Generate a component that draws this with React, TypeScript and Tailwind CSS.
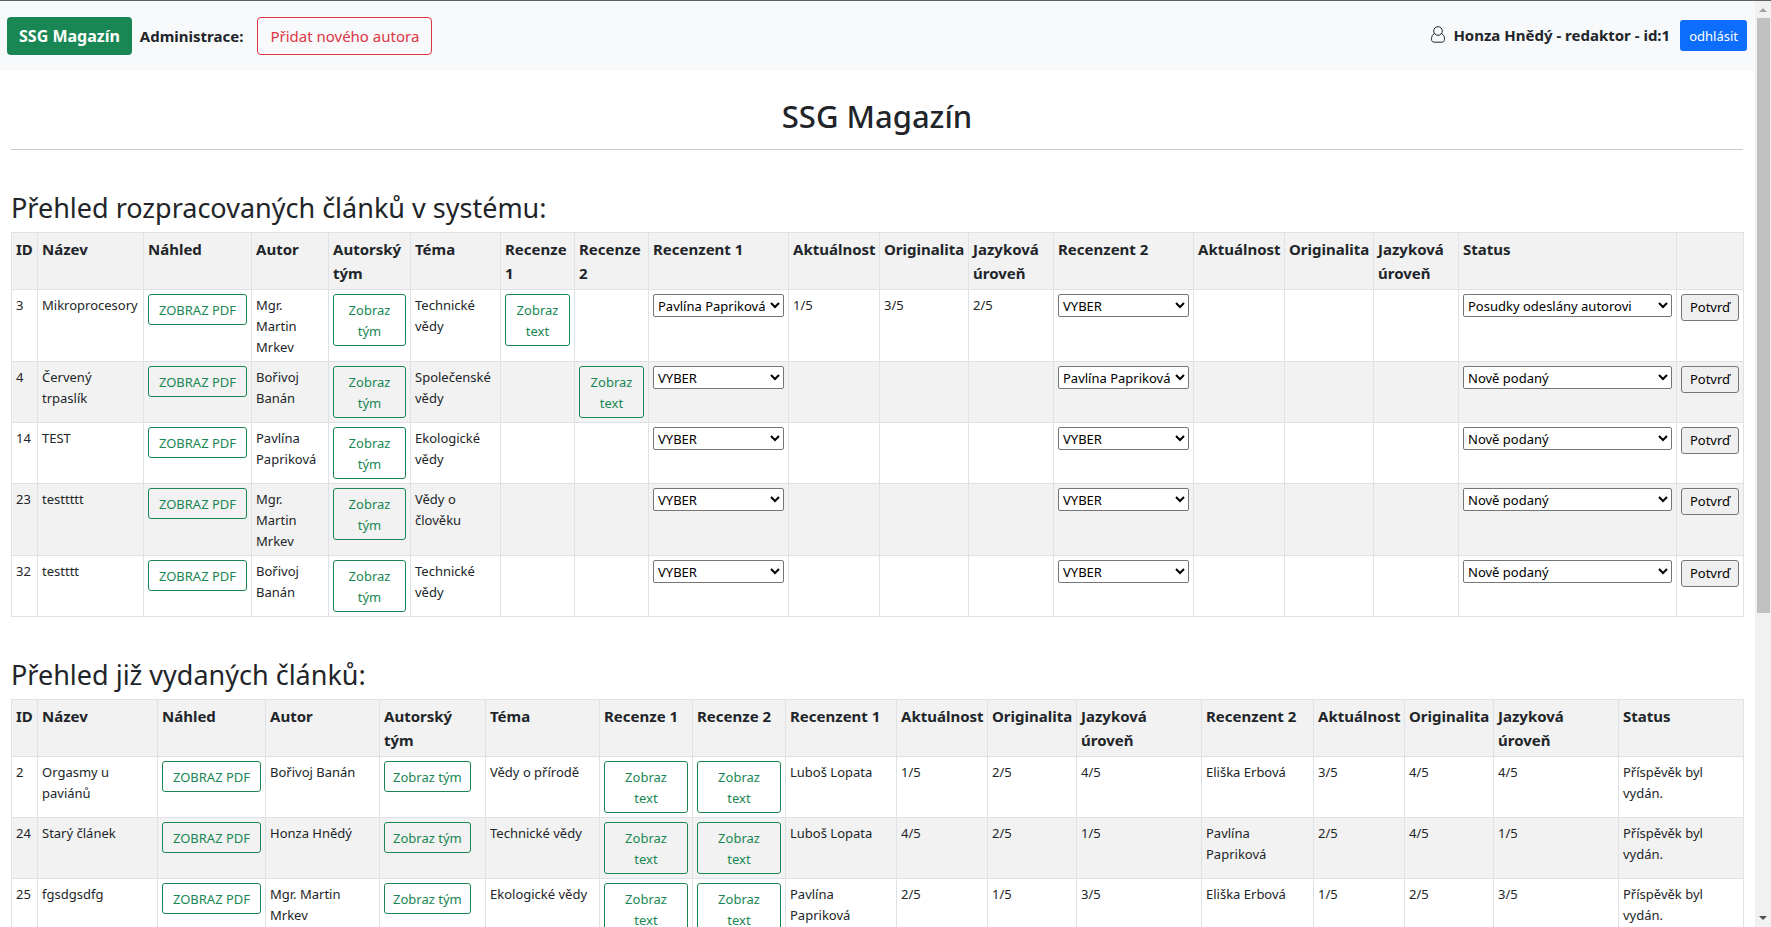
import type { ReactNode } from "react";

type WorkRow = {
  id: number;
  name: string;
  author: string;
  topic: string;
  review1: boolean;
  review2: boolean;
  reviewer1: string;
  scores1: string[];
  reviewer2: string;
  scores2: string[];
  status: string;
};

type PublishedRow = {
  id: number;
  name: string;
  author: string;
  topic: string;
  reviewer1: string;
  scores1: string[];
  reviewer2: string;
  scores2: string[];
  status: string;
};

const NONE = ["", "", ""];

const inProgress: WorkRow[] = [
  { id: 3, name: "Mikroprocesory", author: "Mgr. Martin Mrkev", topic: "Technické vědy", review1: true, review2: false, reviewer1: "Pavlína Papriková", scores1: ["1/5", "3/5", "2/5"], reviewer2: "VYBER", scores2: NONE, status: "Posudky odeslány autorovi" },
  { id: 4, name: "Červený trpaslík", author: "Bořivoj Banán", topic: "Společenské vědy", review1: false, review2: true, reviewer1: "VYBER", scores1: NONE, reviewer2: "Pavlína Papriková", scores2: NONE, status: "Nově podaný" },
  { id: 14, name: "TEST", author: "Pavlína Papriková", topic: "Ekologické vědy", review1: false, review2: false, reviewer1: "VYBER", scores1: NONE, reviewer2: "VYBER", scores2: NONE, status: "Nově podaný" },
  { id: 23, name: "testtttt", author: "Mgr. Martin Mrkev", topic: "Vědy o člověku", review1: false, review2: false, reviewer1: "VYBER", scores1: NONE, reviewer2: "VYBER", scores2: NONE, status: "Nově podaný" },
  { id: 32, name: "testttt", author: "Bořivoj Banán", topic: "Technické vědy", review1: false, review2: false, reviewer1: "VYBER", scores1: NONE, reviewer2: "VYBER", scores2: NONE, status: "Nově podaný" },
];

const published: PublishedRow[] = [
  { id: 2, name: "Orgasmy u paviánů", author: "Bořivoj Banán", topic: "Vědy o přírodě", reviewer1: "Luboš Lopata", scores1: ["1/5", "2/5", "4/5"], reviewer2: "Eliška Erbová", scores2: ["3/5", "4/5", "4/5"], status: "Příspěvěk byl vydán." },
  { id: 24, name: "Starý článek", author: "Honza Hnědý", topic: "Technické vědy", reviewer1: "Luboš Lopata", scores1: ["4/5", "2/5", "1/5"], reviewer2: "Pavlína Papriková", scores2: ["2/5", "4/5", "1/5"], status: "Příspěvěk byl vydán." },
  { id: 25, name: "fgsdgsdfg", author: "Mgr. Martin Mrkev", topic: "Ekologické vědy", reviewer1: "Pavlína Papriková", scores1: ["2/5", "1/5", "3/5"], reviewer2: "Eliška Erbová", scores2: ["1/5", "2/5", "3/5"], status: "Příspěvěk byl vydán." },
];

const headers = [
  "ID", "Název", "Náhled", "Autor", "Autorský tým", "Téma", "Recenze 1", "Recenze 2", "Recenzent 1",
  "Aktuálnost", "Originalita", "Jazyková úroveň", "Recenzent 2", "Aktuálnost", "Originalita", "Jazyková úroveň", "Status",
];

const workCols = [
  "w-[26px]", "w-[106px]", "w-[108px]", "w-[77px]", "w-[82px]", "w-[90px]", "w-[74px]", "w-[74px]", "w-[140px]",
  "w-[91px]", "w-[89px]", "w-[85px]", "w-[140px]", "w-[91px]", "w-[89px]", "w-[85px]", "w-[218px]", "w-[67px]",
];

const publishedCols = [
  "w-[26px]", "w-[120px]", "w-[108px]", "w-[114px]", "w-[106px]", "w-[114px]", "w-[93px]", "w-[93px]", "w-[111px]",
  "w-[91px]", "w-[89px]", "w-[125px]", "w-[112px]", "w-[91px]", "w-[89px]", "w-[125px]", "w-[125px]",
];

const reviewers = ["VYBER", "Pavlína Papriková", "Luboš Lopata", "Eliška Erbová"];
const statuses = ["Nově podaný", "Posudky odeslány autorovi", "Příspěvěk byl vydán."];

function Th({ children }: { children?: ReactNode }) {
  return (
    <th className="border border-[#dee2e6] bg-[#f2f2f2] p-1 text-left align-top text-[15px] leading-6 font-bold">
      {children}
    </th>
  );
}

function Td({ children }: { children?: ReactNode }) {
  return <td className="border border-[#dee2e6] px-1 pt-[5px] pb-[3px] align-top">{children}</td>;
}

function ControlTd({ children }: { children?: ReactNode }) {
  return <td className="border border-[#dee2e6] p-1 align-top">{children}</td>;
}

function OutlineButton({ children, fit = false }: { children: ReactNode; fit?: boolean }) {
  return (
    <a
      href="#"
      className={
        fit
          ? "block w-fit rounded-[3px] border border-[#198754] px-2 pt-[5px] pb-[3px] text-center text-[#198754]"
          : "block rounded-[3px] border border-[#198754] px-1 pt-[5px] pb-[3px] text-center text-[#198754]"
      }
    >
      {children}
    </a>
  );
}

function Select({ label, value, options }: { label: string; value: string; options: string[] }) {
  return (
    <select
      aria-label={label}
      defaultValue={value}
      className="block h-[23px] w-full rounded-[2px] border border-[#767676] bg-white text-[13px] text-black"
    >
      {options.map((o) => (
        <option key={o}>{o}</option>
      ))}
    </select>
  );
}

function Grid({ cols, heads, children }: { cols: string[]; heads: string[]; children: ReactNode }) {
  return (
    <table className="w-full table-fixed border-collapse text-[13px] leading-[21px]">
      <colgroup>
        {cols.map((c, i) => (
          <col key={i} className={c} />
        ))}
      </colgroup>
      <thead>
        <tr>
          {heads.map((h, i) => (
            <Th key={i}>{h}</Th>
          ))}
        </tr>
      </thead>
      <tbody className="[&>tr:nth-child(even)]:bg-[#f2f2f2]">{children}</tbody>
    </table>
  );
}

function UserIcon() {
  return (
    <svg viewBox="0 0 14 17" className="h-[17px] w-[14px]" fill="none" stroke="currentColor" strokeWidth="1" aria-hidden="true">
      <circle cx="7" cy="5" r="4.3" />
      <path d="M3.4 7.6C1.400 8.400 .5 10.600 .5 13.200c0 1.900 1.100 3 2.600 3h7.800c1.500 0 2.600-1.100 2.600-3 0-2.600-.9-4.800-2.900-5.600" />
    </svg>
  );
}

function ScrollTrack() {
  return (
    <div className="flex w-4 shrink-0 flex-col bg-[#f1f1f1]" aria-hidden="true">
      <svg viewBox="0 0 16 17" className="h-[17px] w-4" fill="#a3a3a3">
        <path d="M4 11l4-4 4 4z" />
      </svg>
      <div className="flex-1 pr-px pl-0.5">
        <div className="h-2/3 bg-[#c1c1c1]" />
      </div>
      <svg viewBox="0 0 16 17" className="h-[17px] w-4" fill="#505050">
        <path d="M4 6l4 4 4-4z" />
      </svg>
    </div>
  );
}

export default function App() {
  return (
    <div className="flex h-screen overflow-hidden border-t border-[#5f5f66] bg-white font-['Noto_Sans','Open_Sans',sans-serif] text-[#212529]">
      <div className="min-w-0 flex-1 overflow-hidden">
        <header className="flex h-[70px] items-center justify-between bg-[#f8f9fb] pr-2 pb-px pl-[7px]">
          <div className="flex items-center">
            <a href="#" className="rounded-[4px] bg-[#198754] px-3 py-[7px] text-base leading-6 font-bold text-white">
              SSG Magazín
            </a>
            <span className="ml-2 text-[15px] leading-6 font-bold">Administrace:</span>
            <a href="#" className="ml-[14px] rounded-[4px] border border-[#dc3545] px-3 py-1.5 text-[15px] leading-6 text-[#dc3545]">
              Přidat nového autora
            </a>
          </div>
          <div className="flex items-center">
            <div className="flex items-center gap-2 pb-0.5">
              <UserIcon />
              <span className="text-[15px] leading-6 font-bold">Honza Hnědý - redaktor - id:1</span>
            </div>
            <button type="button" className="ml-[10px] rounded-[3px] bg-[#0d6efd] px-[9px] pt-[6px] pb-1 text-[13px] leading-[21px] text-white">
              odhlásit
            </button>
          </div>
        </header>

        <main className="pr-3 pl-[11px]">
          <h1 className="border-b border-[#c8c9ca] pt-[26px] pb-[14px] text-center text-[31px] leading-[38px] font-medium">
            SSG Magazín
          </h1>

          <section className="pt-[41px]">
            <h2 className="mb-[7px] text-[27px] leading-[34px] font-normal">Přehled rozpracovaných článků v systému:</h2>
            <Grid cols={workCols} heads={[...headers, ""]}>
              {inProgress.map((r) => (
                <tr key={r.id}>
                  <Td>{r.id}</Td>
                  <Td>{r.name}</Td>
                  <ControlTd><OutlineButton>ZOBRAZ PDF</OutlineButton></ControlTd>
                  <Td>{r.author}</Td>
                  <ControlTd><OutlineButton>Zobraz<br />tým</OutlineButton></ControlTd>
                  <Td>{r.topic}</Td>
                  <ControlTd>{r.review1 && <OutlineButton>Zobraz<br />text</OutlineButton>}</ControlTd>
                  <ControlTd>{r.review2 && <OutlineButton>Zobraz<br />text</OutlineButton>}</ControlTd>
                  <ControlTd><Select label="Recenzent 1" value={r.reviewer1} options={reviewers} /></ControlTd>
                  {r.scores1.map((s, i) => <Td key={i}>{s}</Td>)}
                  <ControlTd><Select label="Recenzent 2" value={r.reviewer2} options={reviewers} /></ControlTd>
                  {r.scores2.map((s, i) => <Td key={i}>{s}</Td>)}
                  <ControlTd><Select label="Status" value={r.status} options={statuses} /></ControlTd>
                  <ControlTd>
                    <button type="button" className="block h-[27px] w-full rounded-[3px] border border-[#767676] bg-[#efefef] text-[13px] text-black">
                      Potvrď
                    </button>
                  </ControlTd>
                </tr>
              ))}
            </Grid>
          </section>

          <section className="pt-[41px]">
            <h2 className="mb-[7px] text-[27px] leading-[34px] font-normal">Přehled již vydaných článků:</h2>
            <Grid cols={publishedCols} heads={headers}>
              {published.map((r) => (
                <tr key={r.id}>
                  <Td>{r.id}</Td>
                  <Td>{r.name}</Td>
                  <ControlTd><OutlineButton>ZOBRAZ PDF</OutlineButton></ControlTd>
                  <Td>{r.author}</Td>
                  <ControlTd><OutlineButton fit>Zobraz tým</OutlineButton></ControlTd>
                  <Td>{r.topic}</Td>
                  <ControlTd><OutlineButton>Zobraz<br />text</OutlineButton></ControlTd>
                  <ControlTd><OutlineButton>Zobraz<br />text</OutlineButton></ControlTd>
                  <Td>{r.reviewer1}</Td>
                  {r.scores1.map((s, i) => <Td key={i}>{s}</Td>)}
                  <Td>{r.reviewer2}</Td>
                  {r.scores2.map((s, i) => <Td key={i}>{s}</Td>)}
                  <Td>{r.status}</Td>
                </tr>
              ))}
            </Grid>
          </section>
        </main>
      </div>
      <ScrollTrack />
    </div>
  );
}
